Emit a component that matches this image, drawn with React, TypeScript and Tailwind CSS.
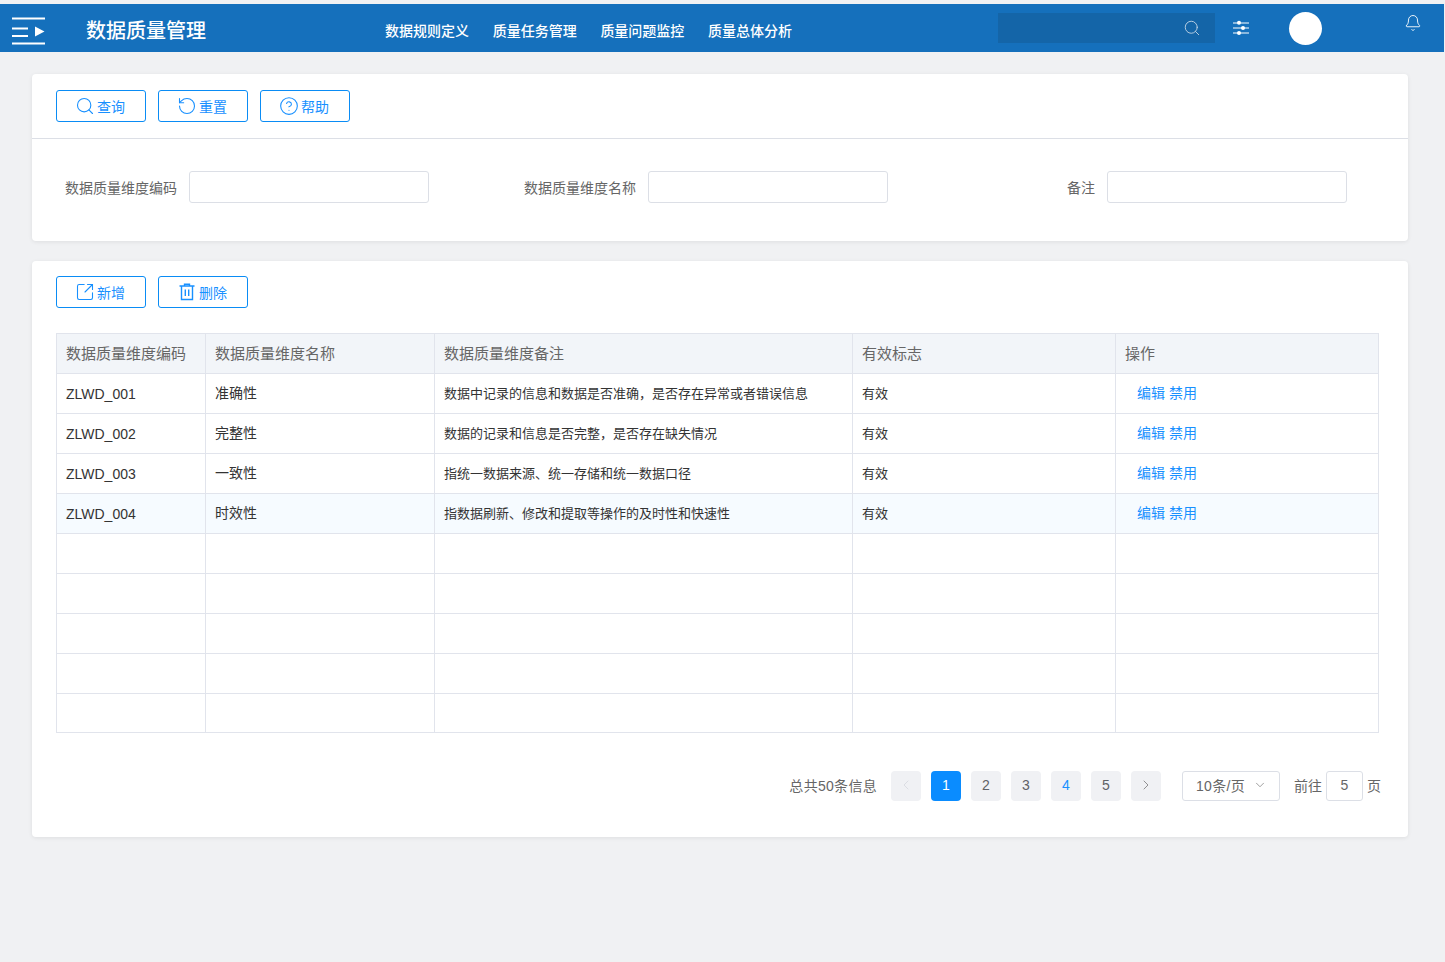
import { Bell, ChevronDown, ChevronLeft, ChevronRight, CircleHelp, RotateCcw, Search, SquareArrowOutUpRight } from "lucide-react";

const font = "font-['Liberation_Sans','Noto_Sans_CJK_SC',sans-serif]";

const navItems = ["数据规则定义", "质量任务管理", "质量问题监控", "质量总体分析"];

const rows = [
  ["ZLWD_001", "准确性", "数据中记录的信息和数据是否准确，是否存在异常或者错误信息", "有效"],
  ["ZLWD_002", "完整性", "数据的记录和信息是否完整，是否存在缺失情况", "有效"],
  ["ZLWD_003", "一致性", "指统一数据来源、统一存储和统一数据口径", "有效"],
  ["ZLWD_004", "时效性", "指数据刷新、修改和提取等操作的及时性和快速性", "有效"],
];

function OutlineButton({ icon, label }: { icon: React.ReactNode; label: string }) {
  return (
    <button className="flex h-8 w-[90px] items-center gap-[2px] rounded-[3px] border border-[#0a8cf5] bg-white pl-[18px] text-sm text-[#1890ff]">
      {icon}
      <span className="pt-px">{label}</span>
    </button>
  );
}

function TrashIcon() {
  return (
    <svg className="h-5 w-5" viewBox="0 0 20 20" fill="none" stroke="currentColor" strokeWidth="1.4">
      <path d="M2.5 4h15M7.5 4V2.2h5V4M4.5 4v13.5h11V4M8.3 7.5v6.5M11.7 7.5v6.5" />
    </svg>
  );
}

function Field({ label, labelWidth, className }: { label: string; labelWidth: string; className?: string }) {
  return (
    <div className={`flex items-center ${className ?? ""}`}>
      <span className={`${labelWidth} pt-px text-right text-sm text-[#666]`}>{label}</span>
      <div className="ml-3 h-8 w-60 rounded-[3px] border border-[#dcdfe6] bg-white" />
    </div>
  );
}

function PageBox({ children, className }: { children: React.ReactNode; className?: string }) {
  return (
    <div className={`flex h-[30px] w-[30px] items-center justify-center rounded-sm pb-[3px] text-sm font-medium ${className ?? "bg-[#f0f1f4] text-[#606266]"}`}>
      {children}
    </div>
  );
}

function Row({ cells, highlight, header }: { cells?: string[]; highlight?: boolean; header?: boolean }) {
  const bg = header ? "bg-[#f2f5f9]" : highlight ? "bg-[#f6fbff]" : "bg-white";
  const widths = ["w-[149px]", "w-[229px]", "w-[418px]", "w-[263px]", "w-[263px]"];
  const last = 4;

  const cellText = (i: number) => {
    if (header) return "pt-px text-[15px] text-[#666]";
    if (i === 0) return "pt-px text-sm text-[#333]";
    if (i === 1) return "pb-px text-sm text-[#333]";
    return "text-[13px] text-[#333]";
  };

  return (
    <div className={`flex h-10 border-b border-[#e1e4ec] last:h-[39px] ${bg}`}>
      {widths.map((w, i) => (
        <div
          key={w + i}
          className={`${w} flex shrink-0 items-center px-[9px] ${i < last ? "border-r border-[#e1e4ec]" : ""} ${cellText(i)}`}
        >
          {cells?.[i]}
          {!header && cells && i === last && (
            <span className="mb-px ml-3 flex gap-1 text-sm text-[#1890ff]">
              <span>编辑</span>
              <span>禁用</span>
            </span>
          )}
        </div>
      ))}
    </div>
  );
}

export default function App() {
  return (
    <div className={`${font} h-[962px] w-[1445px] overflow-hidden bg-[#f0f1f3] pt-1`}>
      {/* top bar */}
      <header className="flex h-12 w-[1444px] items-center bg-[#1570bc] text-white">
        <svg className="ml-3 mt-[5px] h-[28px] w-[34px] shrink-0" viewBox="0 0 34 28" fill="#fff">
          <rect x="0" y="0.5" width="33" height="2" />
          <rect x="0" y="10.5" width="16" height="2" />
          <rect x="0" y="18" width="16" height="2" />
          <rect x="0" y="25.5" width="33" height="2" />
          <path d="M23 9.5 L32.5 14.5 L23 19.5 Z" />
        </svg>
        <div className="ml-[40px] w-[299px] shrink-0 pt-[6px] text-xl font-medium">数据质量管理</div>
        <nav className="flex gap-[23.7px] pt-[6px] text-sm font-medium">
          {navItems.map((item) => (
            <span key={item}>{item}</span>
          ))}
        </nav>
        <div className="ml-[206.4px] flex h-[30px] w-[217px] shrink-0 items-center justify-end bg-[#1465a8] pr-[14px]">
          <Search className="h-[18px] w-[18px] text-[#c4d6e6]" strokeWidth={1.2} />
        </div>
        <svg className="ml-[18px] h-4 w-4 shrink-0" viewBox="0 0 16 16" fill="#fff" stroke="#fff" strokeWidth="1">
          <path d="M0 3h16M0 8h16M0 13h16" />
          <circle cx="6" cy="2.8" r="2" stroke="none" />
          <circle cx="10" cy="8" r="2" stroke="none" />
          <circle cx="6" cy="13" r="2" stroke="none" />
        </svg>
        <div className="ml-10 h-[33px] w-[33px] shrink-0 rounded-full bg-white" />
        <Bell className="mb-[10px] ml-[82px] h-[18px] w-[18px] shrink-0" strokeWidth={1.2} />
      </header>

      <main className="ml-8 mt-[22px] flex w-[1376px] flex-col gap-5">
        {/* search card */}
        <section className="h-[167px] rounded-[4px] bg-white shadow-[0_1px_4px_rgba(0,0,0,0.08)]">
          <div className="flex h-[65px] gap-3 border-b border-[#dcdfe6] px-6 pt-4">
            <OutlineButton icon={<Search className="h-5 w-5" strokeWidth={1.3} />} label="查询" />
            <OutlineButton icon={<RotateCcw className="h-5 w-5" strokeWidth={1.3} />} label="重置" />
            <OutlineButton icon={<CircleHelp className="h-5 w-5" strokeWidth={1.3} />} label="帮助" />
          </div>
          <div className="flex pl-[33px] pt-8">
            <Field label="数据质量维度编码" labelWidth="w-[112px]" />
            <Field label="数据质量维度名称" labelWidth="w-[112px]" className="ml-[95px]" />
            <Field label="备注" labelWidth="w-[112px]" className="ml-[95px]" />
          </div>
        </section>

        {/* table card */}
        <section className="h-[576px] rounded-[4px] bg-white px-6 pt-[15px] shadow-[0_1px_4px_rgba(0,0,0,0.08)]">
          <div className="flex gap-3">
            <OutlineButton icon={<SquareArrowOutUpRight className="h-5 w-5" strokeWidth={1.3} />} label="新增" />
            <OutlineButton icon={<TrashIcon />} label="删除" />
          </div>

          <div className="mt-[25px] w-[1323px] border-l border-r border-t border-[#e1e4ec]">
            <Row header cells={["数据质量维度编码", "数据质量维度名称", "数据质量维度备注", "有效标志", "操作"]} />
            {rows.map((cells, i) => (
              <Row key={cells[0]} cells={cells} highlight={i === 3} />
            ))}
            {[0, 1, 2, 3, 4].map((n) => (
              <Row key={n} />
            ))}
          </div>

          <div className="mr-[3px] mt-[38px] flex w-[1323px] items-center justify-end text-sm text-[#666]">
            <span className="mr-[14px] tracking-[0.3px]">总共50条信息</span>
            <div className="flex gap-[10px]">
              <PageBox>
                <ChevronLeft className="h-4 w-4 text-[#d5d8de]" strokeWidth={1.2} />
              </PageBox>
              <PageBox className="bg-[#0a8cff] text-white">1</PageBox>
              <PageBox>2</PageBox>
              <PageBox>3</PageBox>
              <PageBox className="bg-[#f0f1f4] text-[#1890ff]">4</PageBox>
              <PageBox>5</PageBox>
              <PageBox>
                <ChevronRight className="h-4 w-4 text-[#777]" strokeWidth={1.2} />
              </PageBox>
            </div>
            <div className="ml-[21px] flex h-[30px] w-[98px] items-center justify-between rounded-[3px] border border-[#dcdfe6] pl-[13px] pr-[12px]">
              <span className="tracking-[0.3px]">10条/页</span>
              <ChevronDown className="mb-[2px] h-[14px] w-[14px] text-[#777]" strokeWidth={1.2} />
            </div>
            <span className="ml-[14px]">前往</span>
            <div className="ml-1 flex h-[30px] w-[37px] items-center justify-center rounded-[3px] border border-[#dcdfe6] pb-[2px]">5</div>
            <span className="ml-1 mr-[-2px]">页</span>
          </div>
        </section>
      </main>
    </div>
  );
}
